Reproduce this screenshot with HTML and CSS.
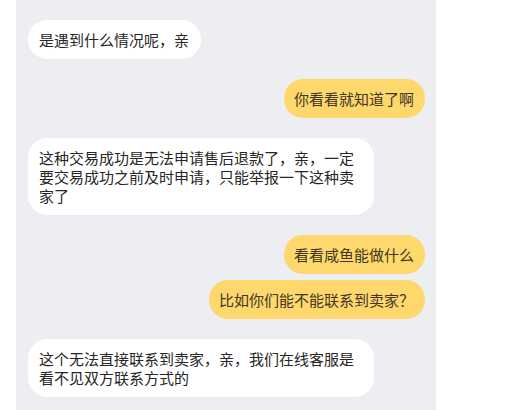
FILE: index.html
```html
<!DOCTYPE html>
<html lang="zh-CN">
<head>
<meta charset="utf-8">
<link rel="stylesheet" href="styles.css">
</head>
<body>
<div class="screen">
  <div class="chat">
    <div class="msg in">是遇到什么情况呢，亲</div>
    <div class="msg out">你看看就知道了啊</div>
    <div class="msg in">这种交易成功是无法申请售后退款了，亲，一定要交易成功之前及时申请，只能举报一下这种卖家了</div>
    <div class="msg out">看看咸鱼能做什么</div>
    <div class="msg out same">比如你们能不能联系到卖家？</div>
    <div class="msg in">这个无法直接联系到卖家，亲，我们在线客服是看不见双方联系方式的</div>
  </div>
</div>
</body>
</html>
```
FILE: styles.css
```css
html, body {
  margin: 0;
  padding: 0;
  background: #ffffff;
  height: 100%;
}
.screen {
  display: flex;
  height: 410px;
  padding-left: 16px;
  overflow: hidden;
}
.chat {
  width: 420px;
  background: #edeef2;
  display: flex;
  flex-direction: column;
  padding: 20px 11px 0 12px;
  box-sizing: border-box;
  font-family: "Noto Sans CJK SC", "Noto Sans", sans-serif;
  font-size: 15px;
  line-height: 19px;
}
.msg {
  box-sizing: border-box;
  max-width: 346px;
  padding: 10px 12px 10px 11px;
  border-radius: 19px;
  margin-bottom: 20px;
}
.msg.in {
  align-self: flex-start;
  background: #ffffff;
  color: #262626;
  box-shadow: 0 1px 2px rgba(0, 0, 0, 0.02);
}
.msg.out {
  align-self: flex-end;
  background: #fed86d;
  color: #3f3724;
  padding-left: 10px;
  padding-right: 11px;
}
.msg.out:has(+ .same) {
  margin-bottom: 6px;
}
```
